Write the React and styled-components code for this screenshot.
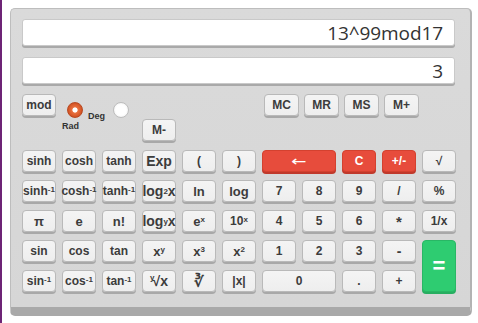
import React from "react";
import styled, { createGlobalStyle, css } from "styled-components";

const Global = createGlobalStyle`
  html, body { margin: 0; padding: 0; background: #ffffff; }
  body {
    border-left: 2px solid #6d2476;
    min-height: 323px;
    box-sizing: border-box;
    font-family: "Liberation Sans", Arial, sans-serif;
  }
`;

const Panel = styled.div`
  box-sizing: border-box;
  margin: 8px 0 0 8px;
  width: 462px;
  height: 308px;
  background: linear-gradient(#dadada, #d6d6d6);
  border: 1px solid #bdbdbd;
  border-right: 2px solid #b3b3b3;
  border-bottom: 9px solid #a9a9a9;
  border-radius: 5px;
  padding: 10px 0 0 11px;
`;

const Display = styled.div`
  box-sizing: border-box;
  width: 433px;
  height: 27px;
  background: #ffffff;
  border: 1px solid #c9c9c9;
  border-radius: 3px;
  box-shadow: 0 2px 0 #a9a9a9;
  margin-bottom: ${(p) => p.$gap}px;
  padding: 0 11px;
  display: flex;
  align-items: center;
  justify-content: flex-end;
  font-family: "Open Sans", "Liberation Sans", sans-serif;
  font-size: 19px;
  color: #333333;
  letter-spacing: -0.1px;
`;

const TopControls = styled.div`
  display: flex;
  align-items: flex-start;
  height: 56px;
`;

const btnBase = css`
  box-sizing: border-box;
  height: 22px;
  border-radius: 4px;
  font-family: "Liberation Sans", Arial, sans-serif;
  font-weight: bold;
  display: flex;
  align-items: center;
  justify-content: center;
  padding: 0;
  cursor: pointer;
`;

const variants = {
  plain: css`
    background: linear-gradient(#f4f4f4, #eeeeee);
    border: 1px solid #b9b9b9;
    box-shadow: 0 2px 0 #a8a8a8;
    color: #3c3c3c;
  `,
  red: css`
    background: #e74c3c;
    border: 1px solid #d4412f;
    box-shadow: 0 2px 0 #c0392b;
    color: #ffffff;
  `,
  green: css`
    background: #2ecc71;
    border: 1px solid #29b765;
    box-shadow: 0 2px 0 #27ae60;
    color: #ffffff;
  `,
};

const Key = styled.button`
  ${btnBase}
  ${(p) => variants[p.$variant || "plain"]}
  font-size: ${(p) => p.$size || 12}px;
  grid-column: span ${(p) => p.$cols || 1};
  grid-row: span ${(p) => p.$rows || 1};
  height: ${(p) => (p.$rows === 2 ? "auto" : "22px")};
  line-height: 1;
  sup, sub { font-size: 8px; line-height: 0; }
  sup { position: relative; top: -1px; vertical-align: super; }
  sub { position: relative; top: 1px; vertical-align: sub; }
`;

const RootIndex = styled.sup`
  margin-right: -2px;
  position: relative;
  top: -3px !important;
`;

const Arrow = styled.span`
  display: inline-block;
  font-family: "DejaVu Sans", sans-serif;
  font-weight: normal;
  font-size: 14px;
  transform: scaleX(1.3);
`;

const TopKey = styled.button`
  ${btnBase}
  ${variants.plain}
  font-size: 12px;
  width: ${(p) => p.$w}px;
  margin-top: ${(p) => p.$top || 0}px;
  margin-left: ${(p) => p.$left || 0}px;
  flex: none;
`;

const RadioGroup = styled.div`
  display: flex;
  align-items: flex-start;
  margin-left: 6px;
  margin-top: 8px;
  width: 80px;
  flex: none;
`;

const RadioCol = styled.div`
  display: flex;
  flex-direction: column;
  align-items: flex-start;
  width: 26px;
`;

const Radio = styled.span`
  box-sizing: border-box;
  display: block;
  width: 16px;
  height: 16px;
  border-radius: 50%;
  margin-left: ${(p) => (p.$checked ? 5 : 0)}px;
  ${(p) =>
    p.$checked
      ? css`
          background: radial-gradient(circle, #ffffff 0 2.2px, #e8713f 3px, #d95a2a 6px, #c44a1f 8px);
          border: 1px solid #b94a22;
        `
      : css`
          background: radial-gradient(circle, #ffffff 0 5px, #f1f1f1 8px);
          border: 1px solid #bdbdbd;
        `}
`;

const RadioLabel = styled.span`
  font-family: "Liberation Sans", Arial, sans-serif;
  font-weight: bold;
  font-size: 9px;
  color: #333333;
  margin-top: ${(p) => p.$top}px;
  width: ${(p) => p.$w}px;
`;

const MemoryGroup = styled.div`
  display: flex;
  gap: 5px;
  margin-left: 88px;
  flex: none;
`;

const Keypad = styled.div`
  display: grid;
  grid-template-columns: repeat(11, 34px);
  grid-auto-rows: 22px;
  column-gap: 6px;
  row-gap: 8px;
`;

const keys = [
  ["sinh"], ["cosh"], ["tanh"], ["Exp", { size: 14 }], ["("], [")"],
  [<Arrow>←</Arrow>, { variant: "red", cols: 2 }], ["C", { variant: "red" }], ["+/-", { variant: "red" }], ["√"],
  [<>sinh<sup>-1</sup></>], [<>cosh<sup>-1</sup></>], [<>tanh<sup>-1</sup></>], [<>log<sub>2</sub>x</>, { size: 14 }], ["ln", { size: 13 }], ["log", { size: 13 }],
  ["7"], ["8"], ["9"], ["/"], ["%"],
  ["π", { size: 13 }], ["e", { size: 13 }], ["n!", { size: 13 }], [<>log<sub>y</sub>x</>, { size: 14 }], [<>e<sup>x</sup></>, { size: 13 }], [<>10<sup>x</sup></>],
  ["4"], ["5"], ["6"], ["*", { size: 15 }], ["1/x"],
  ["sin"], ["cos"], ["tan"], [<>x<sup>y</sup></>, { size: 13 }], [<>x<sup>3</sup></>, { size: 13 }], [<>x<sup>2</sup></>, { size: 13 }],
  ["1"], ["2"], ["3"], ["-", { size: 14 }], ["=", { variant: "green", rows: 2, size: 22 }],
  [<>sin<sup>-1</sup></>], [<>cos<sup>-1</sup></>], [<>tan<sup>-1</sup></>], [<><RootIndex>y</RootIndex>√x</>, { size: 14 }], ["∛", { size: 15 }], ["|x|"],
  ["0", { cols: 2 }], ["."], ["+"],
];

export default function App() {
  return (
    <>
      <Global />
      <Panel>
        <Display $gap={11}>13^99mod17</Display>
        <Display $gap={10}>3</Display>
        <TopControls>
          <TopKey $w={34}>mod</TopKey>
          <RadioGroup>
            <RadioCol>
              <Radio $checked />
              <RadioLabel $top={3} $w={20}>Rad</RadioLabel>
            </RadioCol>
            <RadioLabel $top={9} $w={25}>Deg</RadioLabel>
            <Radio />
          </RadioGroup>
          <TopKey $w={34} $top={25}>M-</TopKey>
          <MemoryGroup>
            <TopKey $w={35}>MC</TopKey>
            <TopKey $w={35}>MR</TopKey>
            <TopKey $w={35}>MS</TopKey>
            <TopKey $w={35}>M+</TopKey>
          </MemoryGroup>
        </TopControls>
        <Keypad>
          {keys.map(([label, o = {}], i) => (
            <Key
              key={i}
              $variant={o.variant}
              $cols={o.cols}
              $rows={o.rows}
              $size={o.size}
            >
              {label}
            </Key>
          ))}
        </Keypad>
      </Panel>
    </>
  );
}
